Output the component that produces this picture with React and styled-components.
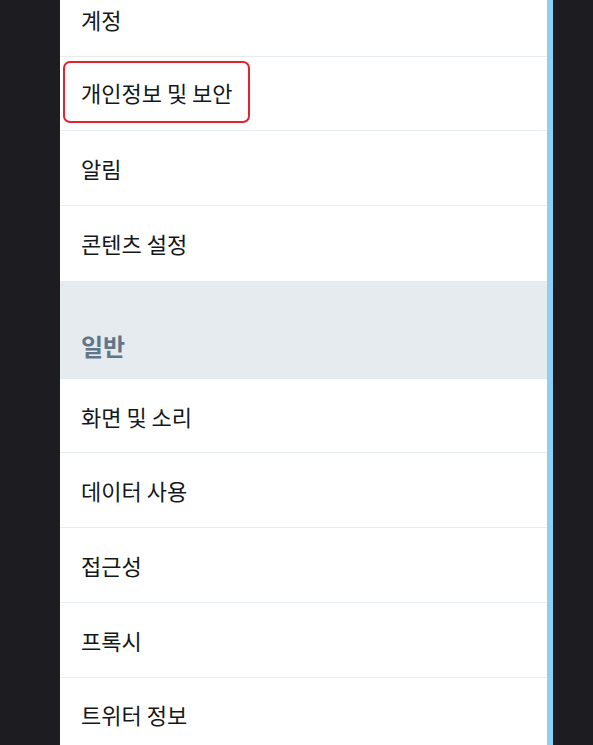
import React from 'react'
import styled, {createGlobalStyle} from 'styled-components'

const Global = createGlobalStyle`
    html, body {
        margin:0;
        padding:0;
        background:#1d1d21;
        overflow:hidden;
    }
    body{
        font-family: "Noto Sans CJK KR", "Noto Sans", sans-serif;
    }
`

const groups = [
    {
        title: null,
        items: [
            {label: "계정"},
            {label: "개인정보 및 보안", highlight: true},
            {label: "알림"},
            {label: "콘텐츠 설정"},
        ],
    },
    {
        title: "일반",
        items: [
            {label: "화면 및 소리"},
            {label: "데이터 사용"},
            {label: "접근성"},
            {label: "프록시"},
            {label: "트위터 정보"},
        ],
    },
]

const App = () => {
  return (
    <Screen>
        <Global/>
        <Panel>
            <List>
            {groups.map((g, gi) => (
                <React.Fragment key={gi}>
                    {g.title && <SectionHeader>{g.title}</SectionHeader>}
                    {g.items.map((item) => (
                        <Row key={item.label}>
                            <Label $highlight={item.highlight}>{item.label}</Label>
                        </Row>
                    ))}
                </React.Fragment>
            ))}
            </List>
        </Panel>
    </Screen>
  )
}

const Screen = styled.div`
    display:flex;
    width:593px;
    height:745px;
    overflow:hidden;
    background:#1d1d21;
    padding-left:60px;
    box-sizing:border-box;
`

const Panel = styled.div`
    width:493px;
    height:100%;
    background:#fff;
    border-right:6px solid #8ecff6;
    box-sizing:border-box;
`

const List = styled.ul`
    list-style:none;
    margin:-18px 0 0 0;
    padding:0;
`

const Row = styled.li`
    display:flex;
    align-items:center;
    height:74.7px;
    box-sizing:border-box;
    padding-left:21px;
    border-bottom:1px solid #e6ecf0;
    color:#14171a;
    font-size:22px;

    &:nth-child(4){
        border-bottom:none;
    }
`

const Label = styled.span`
    display:inline-flex;
    align-items:center;
    line-height:1;
    ${p => p.$highlight && `
        width:187px;
        height:62px;
        box-sizing:border-box;
        margin:-4px 0 0 -18px;
        padding:0 0 0 16px;
        border:2px solid #e5222f;
        border-radius:7px;
    `}
`

const SectionHeader = styled.li`
    display:flex;
    align-items:flex-end;
    height:98px;
    box-sizing:border-box;
    padding:0 0 21px 21px;
    background:#e6ebf0;
    color:#627588;
    font-size:24px;
    font-weight:600;
    line-height:1;
`

export default App
